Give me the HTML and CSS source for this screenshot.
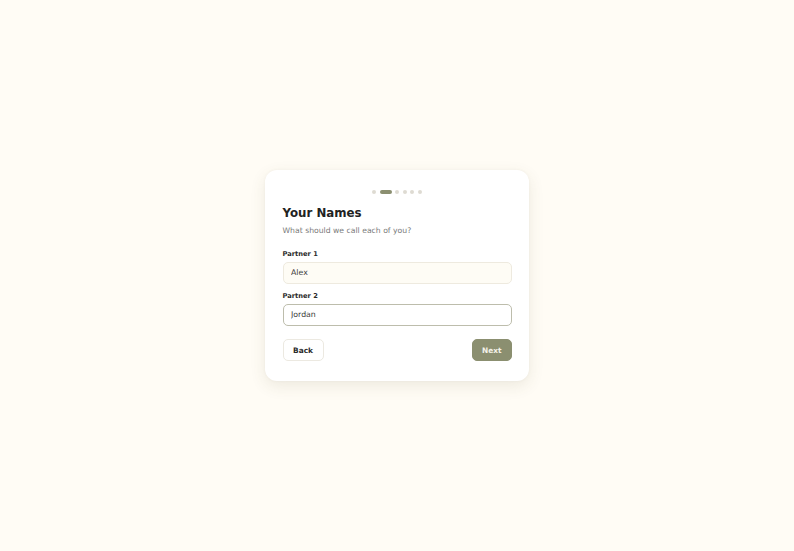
FILE: index.html
```html
<!DOCTYPE html>
<html lang="en">
<head>
<meta charset="utf-8">
<title>Your Names</title>
<link rel="stylesheet" href="styles.css">
</head>
<body>
<main class="page">
  <section class="card">
    <div class="steps">
      <span class="dot"></span>
      <span class="dot active"></span>
      <span class="dot"></span>
      <span class="dot"></span>
      <span class="dot"></span>
      <span class="dot"></span>
    </div>
    <h1 class="title">Your Names</h1>
    <p class="subtitle">What should we call each of you?</p>
    <label class="label" for="p1">Partner 1</label>
    <input class="field filled" id="p1" type="text" value="Alex">
    <label class="label second" for="p2">Partner 2</label>
    <input class="field focused" id="p2" type="text" value="Jordan">
    <div class="actions">
      <button class="btn back" type="button">Back</button>
      <button class="btn next" type="button">Next</button>
    </div>
  </section>
</main>
</body>
</html>
```
FILE: styles.css
```css
* { box-sizing: border-box; }
html, body { margin: 0; padding: 0; }
body {
  background: #fffcf5;
  font-family: "DejaVu Sans", Verdana, sans-serif;
  color: #262626;
}
.page {
  width: 794px;
  height: 551px;
  display: flex;
  align-items: center;
  justify-content: center;
}
.card {
  width: 264px;
  background: #ffffff;
  border-radius: 12px;
  padding: 20px 17.5px 20px;
  box-shadow: 0 5px 16px rgba(90, 80, 50, 0.11), 0 0 3px rgba(90, 80, 50, 0.05);
  display: flex;
  flex-direction: column;
}
.steps {
  display: flex;
  justify-content: center;
  gap: 3.5px;
  height: 4px;
}
.dot {
  width: 4px;
  height: 4px;
  border-radius: 2px;
  background: #dedbd2;
}
.dot.active {
  width: 12px;
  background: #8b8f70;
}
.title {
  margin: 12px 0 0;
  font-size: 11.8px;
  line-height: 14px;
  font-weight: 700;
  color: #222222;
}
.subtitle {
  margin: 6px 0 0;
  font-size: 7.7px;
  line-height: 10px;
  color: #7a7a7a;
}
.label {
  margin-top: 14.5px;
  font-size: 6.7px;
  line-height: 9px;
  font-weight: 700;
  color: #2b2b2b;
}
.label.second { margin-top: 8.5px; }
.field {
  margin-top: 2.5px;
  height: 22px;
  width: 100%;
  border-radius: 5px;
  padding: 0 7.5px;
  font-family: "DejaVu Sans", Verdana, sans-serif;
  font-size: 7.8px;
  color: #3a3a3a;
  outline: none;
}
.field.filled {
  background: #fefcf5;
  border: 1px solid #eeeadf;
}
.field.focused {
  background: #ffffff;
  border: 1px solid #bdbdac;
}
.actions {
  margin-top: 13.5px;
  display: flex;
  justify-content: space-between;
}
.btn {
  height: 22px;
  border-radius: 5px;
  font-family: "DejaVu Sans", Verdana, sans-serif;
  font-size: 7.4px;
  font-weight: 700;
  padding: 0;
  cursor: pointer;
}
.btn.back {
  width: 41px;
  background: #ffffff;
  border: 1px solid #ece9e1;
  color: #2b2b2b;
}
.btn.next {
  width: 39.5px;
  background: #8b8f70;
  border: 1px solid #8b8f70;
  color: #f4f2e8;
}
```
